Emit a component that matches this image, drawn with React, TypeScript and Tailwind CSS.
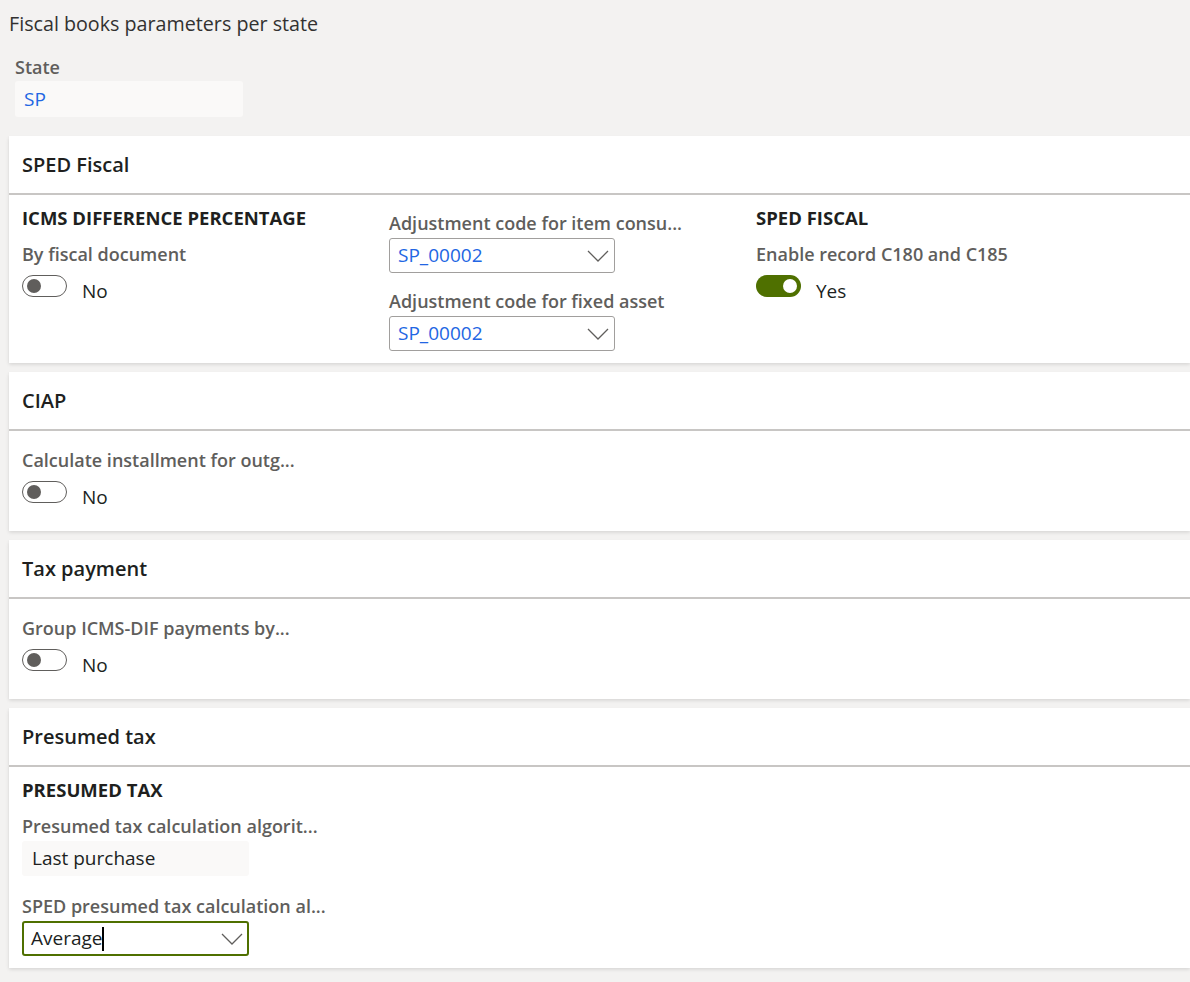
import React from "react";

const font = "font-['Segoe_UI','Open_Sans',sans-serif]";

function Toggle({ on }: { on: boolean }) {
  return (
    <div className="flex items-start mt-[10px] h-[28px]">
      {on ? (
        <div className="w-[45px] h-[22px] rounded-full bg-[#4f7000] flex items-center justify-end pr-[4px]">
          <div className="w-[14px] h-[14px] rounded-full bg-white" />
        </div>
      ) : (
        <div className="w-[45px] h-[22px] rounded-full border border-[#605e5c] bg-white flex items-center pl-[4px]">
          <div className="w-[14px] h-[14px] rounded-full bg-[#605e5c]" />
        </div>
      )}
      <span className="ml-[15px] mt-[4px] text-[19px] leading-[24px] text-[#201f1e]">
        {on ? "Yes" : "No"}
      </span>
    </div>
  );
}

function Chevron() {
  return (
    <svg width="22" height="12" viewBox="0 0 22 12" fill="none">
      <path d="M1 1 L11 11 L21 1" stroke="#605e5c" strokeWidth="1.3" />
    </svg>
  );
}

function Select({ value, blue, focused }: { value: string; blue?: boolean; focused?: boolean }) {
  return (
    <div
      className={
        focused
          ? "w-[227px] h-[35px] rounded-[3px] border-2 border-[#4f7000] flex items-center justify-between pl-[7px] pr-[4px]"
          : "w-[226px] h-[35px] rounded-[3px] border border-[#a19f9d] flex items-center justify-between pl-[8px] pr-[5px]"
      }
    >
      <span className={blue ? "text-[19px] text-[#2266e3]" : "text-[19px] text-[#201f1e] flex items-center"}>
        {value}
        {focused && <span className="inline-block w-[1.5px] h-[24px] bg-black" />}
      </span>
      <Chevron />
    </div>
  );
}

function Label({ children, className = "" }: { children: React.ReactNode; className?: string }) {
  return (
    <div className={"h-[22px] leading-[22px] text-[18px] font-semibold text-[#605e5c] whitespace-nowrap " + className}>
      {children}
    </div>
  );
}

function Group({ children, className = "" }: { children: React.ReactNode; className?: string }) {
  return (
    <div className={"h-[22px] leading-[22px] text-[18.5px] font-bold text-[#201f1e] uppercase whitespace-nowrap " + className}>
      {children}
    </div>
  );
}

function Card({ title, children, bodyClass }: { title: string; children: React.ReactNode; bodyClass: string }) {
  return (
    <div className="bg-white shadow-[0_1.6px_3.6px_rgba(0,0,0,0.13),0_0.3px_0.9px_rgba(0,0,0,0.11)]">
      <div className="h-[57px] px-[13px] flex items-center text-[20px] font-semibold text-[#201f1e]">{title}</div>
      <div className="h-[2px] bg-[#c8c6c4]" />
      <div className={"px-[13px] " + bodyClass}>{children}</div>
    </div>
  );
}

export default function App() {
  return (
    <div className={"min-h-screen bg-[#f3f2f1] pl-[9px] pb-[14px] " + font}>
      <h1 className="pt-[10px] h-[38px] text-[19.7px] leading-[28px] text-[#323130]">Fiscal books parameters per state</h1>
      <div className="pl-[6px]">
        <Label className="mt-[18px]">State</Label>
        <div className="mt-[3px] w-[228px] h-[36px] rounded-[3px] bg-[#faf9f8] flex items-center pl-[9px] text-[19px] text-[#2266e3]">
          SP
        </div>
      </div>

      <div className="mt-[19px] flex flex-col gap-[9px]">
        <Card title="SPED Fiscal" bodyClass="pb-[12px] grid grid-cols-[367px_367px_1fr]">
          <div className="pt-[12px]">
            <Group>ICMS difference percentage</Group>
            <Label className="mt-[14px]">By fiscal document</Label>
            <Toggle on={false} />
          </div>
          <div className="pt-[17px]">
            <Label>Adjustment code for item consu...</Label>
            <div className="mt-[4px]">
              <Select value="SP_00002" blue />
            </div>
            <Label className="mt-[17px]">Adjustment code for fixed asset</Label>
            <div className="mt-[4px]">
              <Select value="SP_00002" blue />
            </div>
          </div>
          <div className="pt-[12px]">
            <Group>SPED Fiscal</Group>
            <Label className="mt-[14px]">Enable record C180 and C185</Label>
            <Toggle on />
          </div>
        </Card>

        <Card title="CIAP" bodyClass="pt-[18px] pb-[22px]">
          <Label>Calculate installment for outg...</Label>
          <Toggle on={false} />
        </Card>

        <Card title="Tax payment" bodyClass="pt-[18px] pb-[22px]">
          <Label>Group ICMS-DIF payments by...</Label>
          <Toggle on={false} />
        </Card>

        <Card title="Presumed tax" bodyClass="pt-[12px] pb-[12px]">
          <Group>Presumed tax</Group>
          <Label className="mt-[14px]">Presumed tax calculation algorit...</Label>
          <div className="mt-[4px] w-[227px] h-[35px] rounded-[3px] bg-[#faf9f8] flex items-center pl-[10px] text-[19px] text-[#201f1e]">
            Last purchase
          </div>
          <Label className="mt-[19px]">SPED presumed tax calculation al...</Label>
          <div className="mt-[4px]">
            <Select value="Average" focused />
          </div>
        </Card>
      </div>
    </div>
  );
}
